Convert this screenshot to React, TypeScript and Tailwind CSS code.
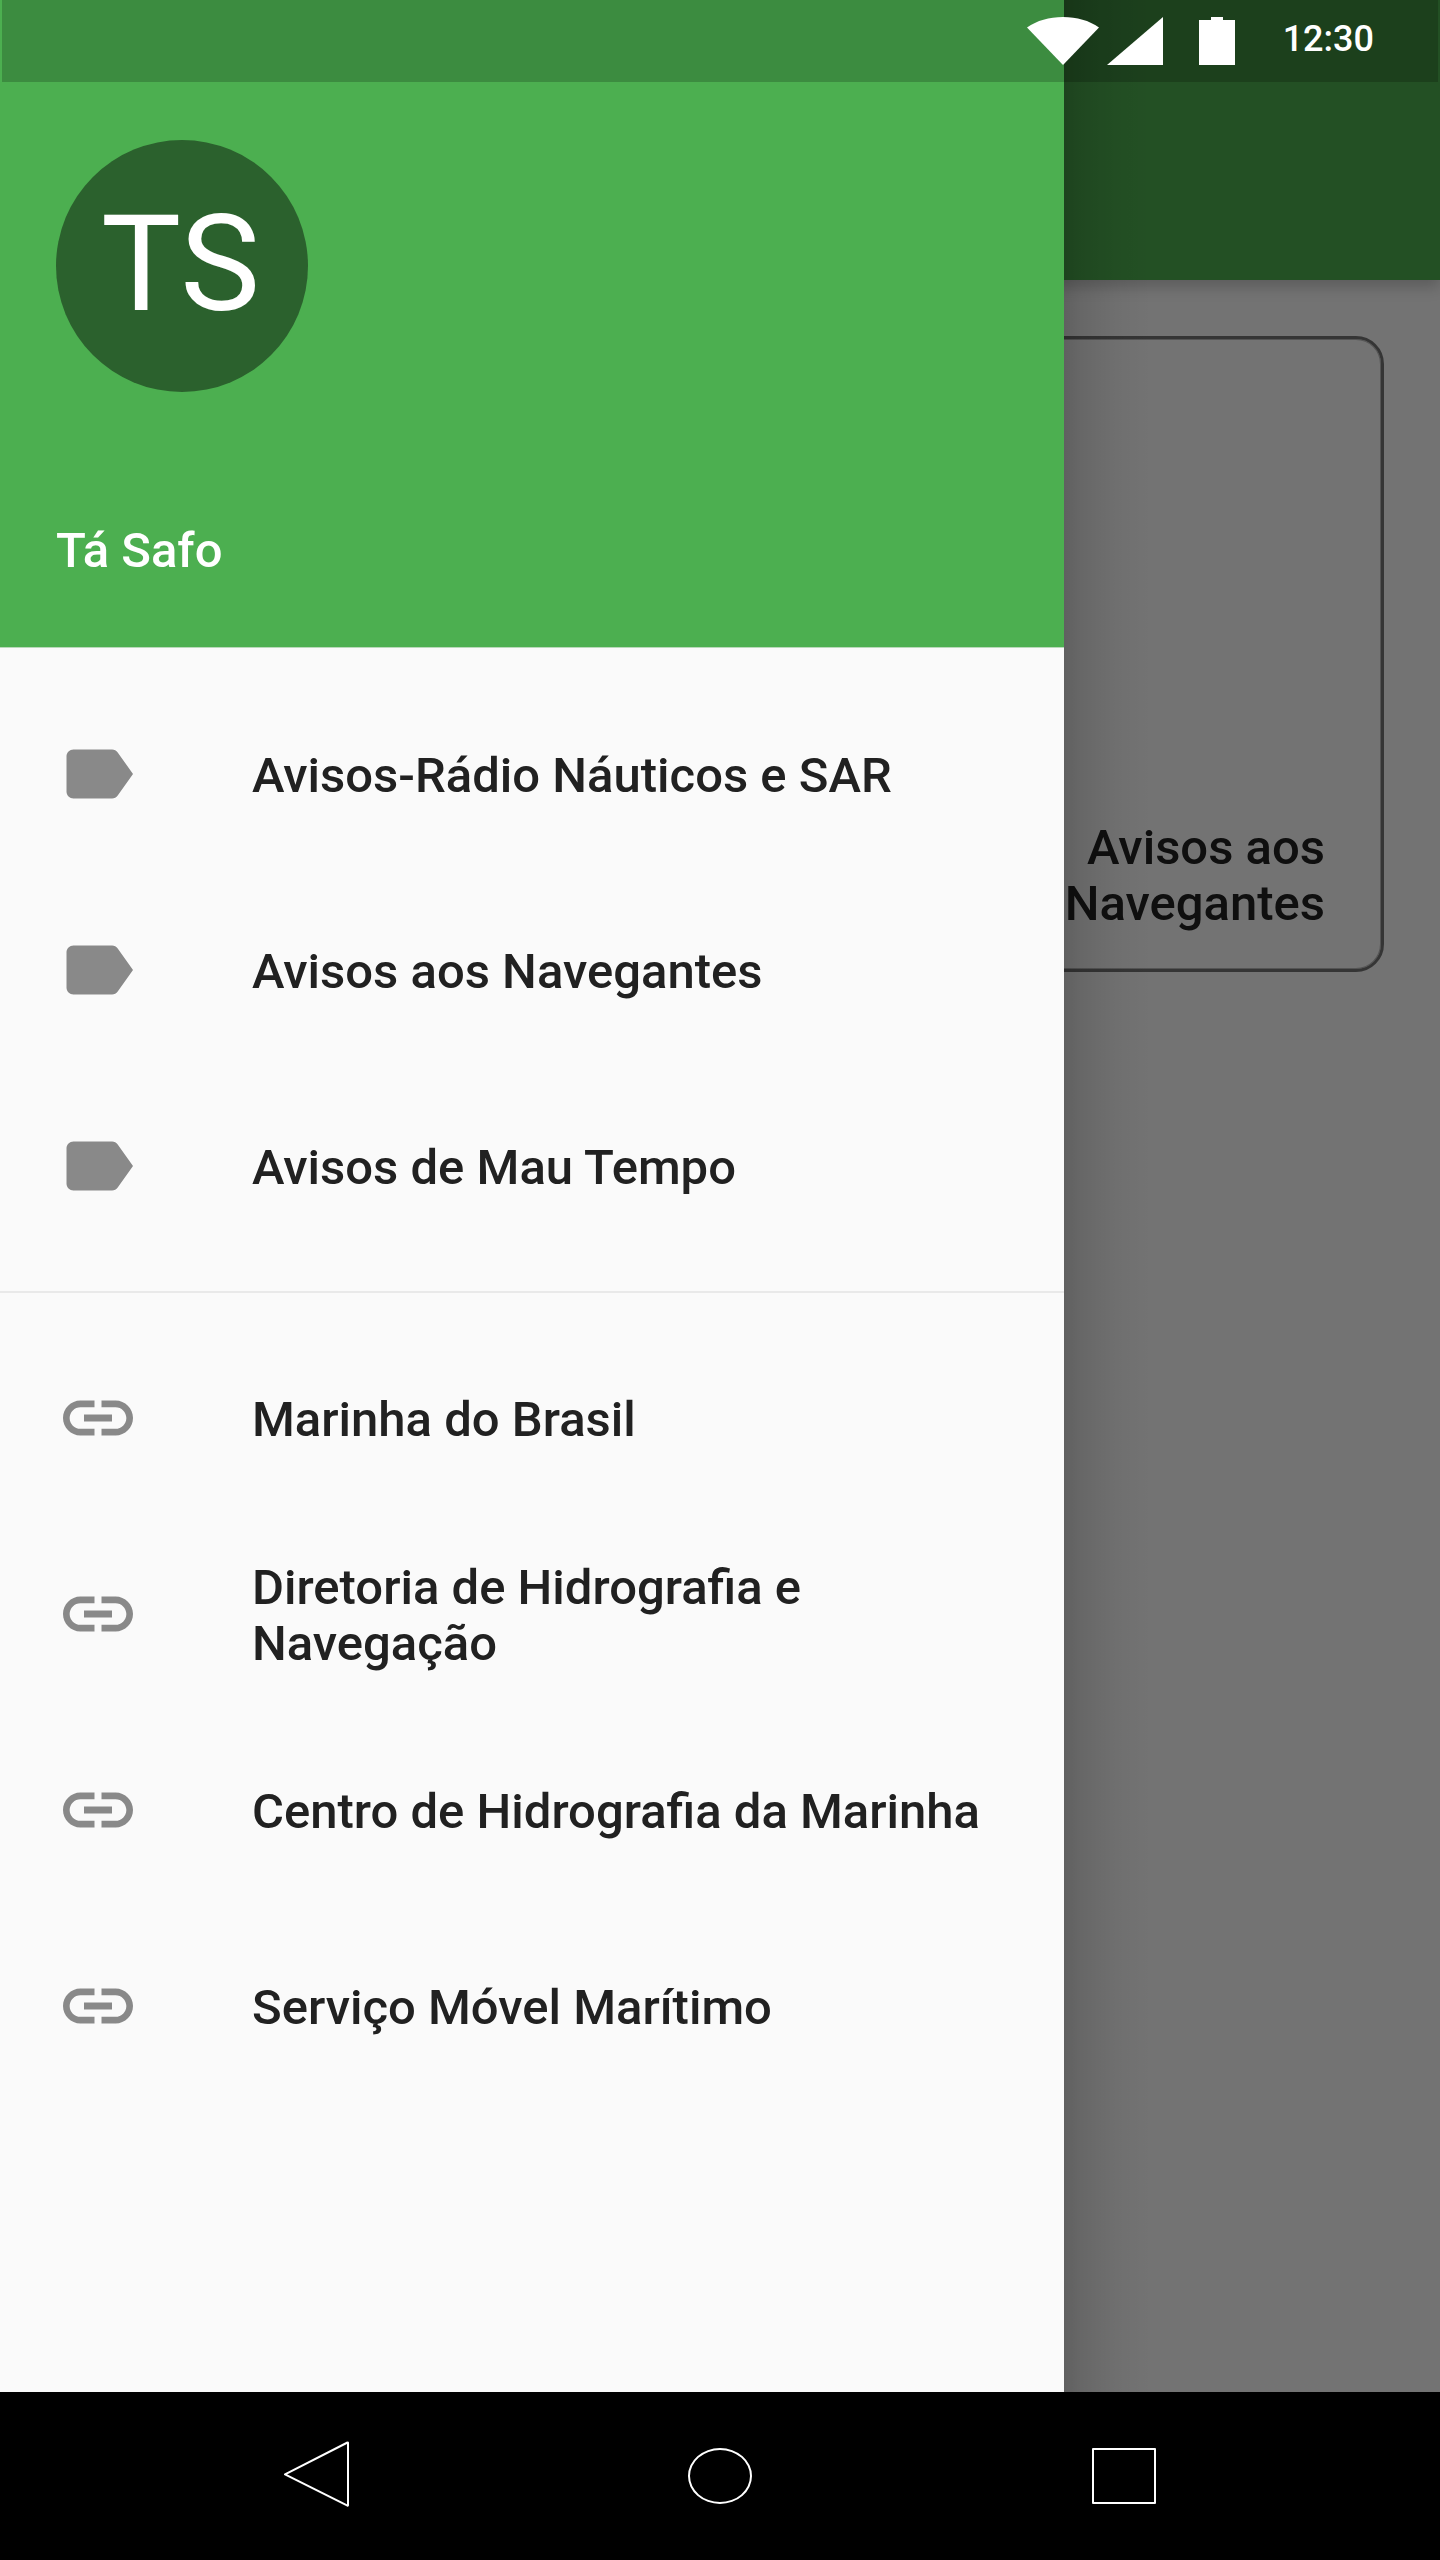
import React from "react";

function LabelIcon() {
  return (
    <svg viewBox="0 0 24 24" className="size-[84px] shrink-0 fill-[#898989]">
      <path d="M17.63 5.84C17.27 5.33 16.67 5 16 5L5 5.01C3.9 5.01 3 5.9 3 7v10c0 1.1.9 1.99 2 1.99L16 19c.67 0 1.27-.33 1.63-.84L22 12l-4.37-6.16z" />
    </svg>
  );
}

function LinkIcon() {
  return (
    <svg viewBox="0 0 24 24" className="size-[84px] shrink-0 fill-[#898989]">
      <path d="M3.9 12c0-1.71 1.39-3.1 3.1-3.1h4V7H7c-2.76 0-5 2.24-5 5s2.24 5 5 5h4v-1.9H7c-1.71 0-3.1-1.39-3.1-3.1zM8 13h8v-2H8v2zm9-6h-4v1.9h4c1.71 0 3.1 1.39 3.1 3.1s-1.39 3.1-3.1 3.1h-4V17h4c2.76 0 5-2.24 5-5s-2.24-5-5-5z" />
    </svg>
  );
}

function Item({ icon, label }: { icon: React.ReactNode; label: string }) {
  return (
    <li className="flex h-[196px] items-center gap-28 px-14">
      {icon}
      <span className="pt-[3px] text-[49px] leading-14 font-medium text-[#212121]">{label}</span>
    </li>
  );
}

function HomePage() {
  return (
    <div className="flex h-full flex-col bg-[#fafafa]">
      <header className="h-[280px] shrink-0 bg-[#4caf50] shadow-[0_7px_14px_rgba(0,0,0,0.2)]" />
      <main className="flex justify-end p-14">
        <section className="flex h-[636px] w-[636px] items-end justify-end rounded-[28px] border-[3px] border-[#757575] pr-[56px] pb-[37px] shadow-[inset_0_0_0_1px_rgba(117,117,117,0.5)]">
          <h2 className="w-[340px] text-right text-[49px] leading-14 font-medium text-[#212121]">
            Avisos aos Navegantes
          </h2>
        </section>
      </main>
    </div>
  );
}

function Drawer() {
  return (
    <aside className="absolute inset-y-0 left-0 flex">
      <div className="w-[1064px] bg-[#fafafa]">
        <div className="flex h-[648px] flex-col justify-between border-b border-[#b9d9ba] bg-[#4caf50] px-14 pt-[140px] pb-[68px]">
          <div className="flex size-[252px] items-center justify-center rounded-full bg-[#2b612d] pr-[3px] pb-1 text-[134.4px] leading-none text-white">
            TS
          </div>
          <div className="text-[49px] leading-14 font-medium text-white">Tá Safo</div>
        </div>
        <nav className="py-7">
          <ul>
            <Item icon={<LabelIcon />} label="Avisos-Rádio Náuticos e SAR" />
            <Item icon={<LabelIcon />} label="Avisos aos Navegantes" />
            <Item icon={<LabelIcon />} label="Avisos de Mau Tempo" />
          </ul>
          <hr className="my-[27px] border-t-2 border-[#e9e9e9]" />
          <ul>
            <Item icon={<LinkIcon />} label="Marinha do Brasil" />
            <Item icon={<LinkIcon />} label="Diretoria de Hidrografia e Navegação" />
            <Item icon={<LinkIcon />} label="Centro de Hidrografia da Marinha" />
            <Item icon={<LinkIcon />} label="Serviço Móvel Marítimo" />
          </ul>
        </nav>
      </div>
      <div className="w-[88px] bg-[linear-gradient(to_right,rgba(0,0,0,0.17),rgba(0,0,0,0.11)_15px,rgba(0,0,0,0.075)_32px,rgba(0,0,0,0.035)_53px,transparent)]" />
    </aside>
  );
}

function StatusBar() {
  return (
    <div className="absolute inset-x-[2px] top-0 flex h-[82px] items-start justify-end bg-black/20 pr-16 text-white">
      <svg viewBox="0 0 72 48" className="mt-[17px] mr-2 h-12 w-18 fill-current">
        <path d="M0 10.5C10 3.5 22 0 36 0S62 3.5 72 10.5L36 48z" />
      </svg>
      <svg viewBox="0 0 56 48" className="mt-[17px] mr-[35.5px] h-12 w-14 fill-current">
        <path d="M56 0V48H0z" />
      </svg>
      <svg viewBox="0 0 36 48" className="mt-[17px] mr-[48px] h-12 w-9 fill-current">
        <path d="M12 0h12v3h12v45H0V3h12z" />
      </svg>
      <span className="mt-[18px] text-[36px] leading-[42px] font-medium">12:30</span>
    </div>
  );
}

function NavigationBar() {
  return (
    <footer className="flex h-[168px] items-start bg-black pl-[284px]">
      <svg viewBox="0 0 66 66" className="mt-[49px] h-[66px] w-[66px] fill-none stroke-white stroke-2">
        <path d="M1 33.3 63.5 1.5Q64 1.2 64 2V64Q64 65 63.5 64.6Z" strokeLinejoin="round" />
      </svg>
      <div className="mt-14 ml-[338px] h-14 w-16 rounded-[50%] border-2 border-white" />
      <div className="mt-14 ml-[340px] h-14 w-16 rounded-[1px] border-2 border-white" />
    </footer>
  );
}

export default function App() {
  return (
    <div className="flex h-[2560px] w-[1440px] flex-col overflow-hidden font-['Roboto',sans-serif]">
      <div className="relative h-[2392px] overflow-hidden">
        <HomePage />
        <div className="absolute inset-0 bg-black/54" />
        <Drawer />
        <StatusBar />
      </div>
      <NavigationBar />
    </div>
  );
}
